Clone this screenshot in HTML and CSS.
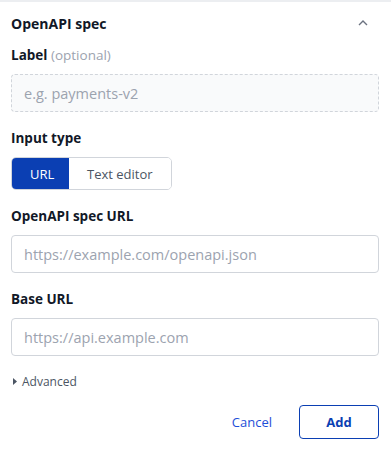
FILE: index.html
```html
<!DOCTYPE html>
<html lang="en">
<head>
    <meta charset="UTF-8">
    <meta name="viewport" content="width=device-width, initial-scale=1.0">
    <title>OpenAPI spec</title>
    <link rel="stylesheet" href="styles.css">
</head>
<body>

<div class="panel">
    <div class="panel-header">
        <div class="panel-title">OpenAPI spec</div>
        <svg class="chevron" width="10" height="6" viewBox="0 0 10 6">
            <path d="M1 5 L5 1 L9 5" fill="none" stroke="#6b7280" stroke-width="1.4"/>
        </svg>
    </div>

    <div class="field">
        <label class="field-label">Label <span class="optional">(optional)</span></label>
        <input class="text-input dashed" type="text" placeholder="e.g. payments-v2">
    </div>

    <div class="field">
        <label class="field-label">Input type</label>
        <div class="segmented">
            <button class="segment active">URL</button>
            <button class="segment">Text editor</button>
        </div>
    </div>

    <div class="field">
        <label class="field-label">OpenAPI spec URL</label>
        <input class="text-input" type="text" placeholder="https://example.com/openapi.json">
    </div>

    <div class="field">
        <label class="field-label">Base URL</label>
        <input class="text-input" type="text" placeholder="https://api.example.com">
    </div>

    <div class="advanced">
        <svg width="4" height="7" viewBox="0 0 4 7">
            <path d="M0 0 L4 3.5 L0 7 Z" fill="#4b5563"/>
        </svg>
        <span>Advanced</span>
    </div>

    <div class="actions">
        <button class="cancel-button">Cancel</button>
        <button class="add-button">Add</button>
    </div>
</div>

</body>
</html>
```

FILE: styles.css
```css
body {
    font-family: "Open Sans", Arial, sans-serif;
    margin: 0;
    padding: 0;
    background: #fff;
    color: #111827;
}

.panel {
    border-top: 2px solid #eceef1;
    padding: 12px 12px 16px 11px;
}

.panel-header {
    display: flex;
    justify-content: space-between;
    align-items: center;
    height: 18px;
    margin-bottom: 14px;
}

.panel-title {
    font-size: 14px;
    font-weight: 700;
}

.chevron {
    margin-right: 11px;
}

.field {
    margin-bottom: 17px;
}

.field-label {
    display: block;
    font-size: 13.5px;
    font-weight: 700;
    line-height: 18px;
    margin-bottom: 10px;
}

.optional {
    font-weight: 400;
    color: #9ca3af;
}

.text-input {
    display: block;
    box-sizing: border-box;
    width: 100%;
    height: 38px;
    padding: 0 12px;
    border: 1px solid #d1d5db;
    border-radius: 4px;
    font-family: inherit;
    font-size: 14.5px;
    color: #111827;
    background: #fff;
    outline: none;
}

.text-input::placeholder {
    color: #9ca3af;
}

.text-input.dashed {
    border: 1px dashed #d1d5db;
    background: #f9fafb;
}

.segmented {
    display: inline-flex;
    border: 1px solid #d1d5db;
    border-radius: 5px;
    overflow: hidden;
    height: 33px;
    box-sizing: border-box;
}

.segment {
    border: none;
    background: #fff;
    font-family: inherit;
    font-size: 13px;
    color: #4b5563;
    padding: 0 18px;
    cursor: pointer;
}

.segment.active {
    background: #0b3fb3;
    color: #fff;
    width: 57px;
}

.advanced {
    display: flex;
    align-items: center;
    gap: 5px;
    font-size: 12px;
    color: #4b5563;
    margin-top: 16px;
    padding-left: 2px;
}

.actions {
    display: flex;
    justify-content: flex-end;
    align-items: center;
    gap: 27px;
    margin-top: 15px;
}

.cancel-button {
    background: none;
    border: none;
    font-family: inherit;
    font-size: 13px;
    color: #1d4ed8;
    cursor: pointer;
    padding: 0;
}

.add-button {
    background: #fff;
    border: 1px solid #0b3fb3;
    border-radius: 4px;
    width: 80px;
    height: 34px;
    font-family: inherit;
    font-size: 13px;
    font-weight: 700;
    color: #0b3fb3;
    cursor: pointer;
}
```
